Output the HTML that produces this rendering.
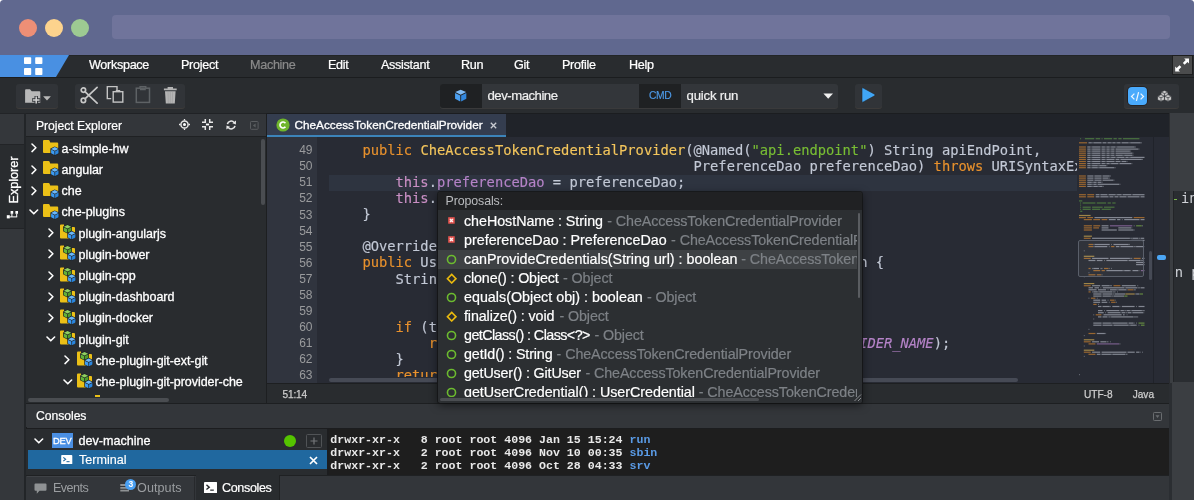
<!DOCTYPE html>
<html lang="en">
<head>
<meta charset="utf-8">
<title>Eclipse Che IDE</title>
<style>
*{box-sizing:border-box;margin:0;padding:0}
html,body{width:1194px;height:500px;overflow:hidden;background:#33363a}
body{position:relative;font-family:"Liberation Sans",sans-serif;color:#fff;font-size:12.5px}
.abs,.abs-all *{position:absolute}
#app{position:absolute;left:0;top:0;width:1194px;height:500px;overflow:hidden;-webkit-font-smoothing:antialiased;will-change:opacity;filter:contrast(1.0001)}
#app div,#app span,#app svg{position:absolute}
/* title bar */
#titlebar{left:0;top:0;width:1194px;height:55px;background:#60688f;border-radius:3.5px 3.5px 0 0}
#titlebar .dot{width:18px;height:18px;border-radius:50%;top:19px}
#addr{left:112px;top:15.3px;width:1058px;height:23.7px;border-radius:4px;background:#70749b}
/* menu bar */
#menubar{left:0;top:55px;width:1194px;height:22px;background:#292c2f;box-shadow:inset 0 1px 0 #222527}
#menubar .mi{top:0;height:22px;line-height:21px;font-size:12.6px;letter-spacing:-0.3px;color:#fff;white-space:nowrap;-webkit-text-stroke:0.22px}
#menubar .mi.dis{color:#8a8a8a}
/* toolbar */
#toolbar{left:0;top:77px;width:1194px;height:36px;background:#292c2f;border-top:1px solid #1b1d1f}
.tbtn{background:#313438;border-radius:3px;box-shadow:0 1px 0 #3d3b3a}

/* left strip */
#lstrip{left:0;top:113px;width:24px;height:387px;background:#34373b;border-top:1px solid #222427}
#lsep{left:24px;top:113px;width:2px;height:387px;background:#222528}
/* explorer */
#explorer{left:27px;top:113px;width:239px;height:290px;background:#292c2f;overflow:hidden}
.phead{background:#33363a;border-top:1px solid #202225;border-bottom:1.6px solid #1f2123}
.ptitle{font-size:12.2px;letter-spacing:-0.05px;color:#fff;white-space:nowrap;-webkit-text-stroke:0.2px #fff}
.row{left:0;width:400px;height:21.2px}
.row .lbl{top:0.8px;line-height:21px;font-size:12.5px;letter-spacing:-0.05px;color:#fff;white-space:nowrap;-webkit-text-stroke:0.3px #fff}
.vsep{background:#1d1f21}

/* editor */
#tabbar{left:267px;top:113px;width:902px;height:24px;background:#202329;border-top:1px solid #1b1d20}
#tab{left:0;top:0;width:238.6px;height:23px;background:#343d4f;border-bottom:2.4px solid #3c84ba}
#editor{left:267px;top:137px;width:902px;height:246px;background:#282b34;overflow:hidden}
#gutter{left:0;top:0;width:50px;height:246px;background:#30343e}
.ln{left:0;width:45.5px;text-align:right;height:16.08px;line-height:16.08px;font-size:12px;color:#9a9b9d}
.cl{-webkit-text-stroke:0.15px;left:62.3px;height:16.08px;line-height:16.08px;font-family:"DejaVu Sans Mono","Liberation Mono",monospace;font-size:13.75px;white-space:pre;color:#c3c9d6}
.k{color:#e8912d}.t{color:#f3c55c}.s{color:#78bd34}.f{color:#b583c8}.th{color:#c98fc4}.c{color:#c3c9d6}
#app .cl span{position:static}
#status{left:267px;top:384px;width:902px;height:19px;background:#292c2f}
#status span{font-size:10.1px;color:#cdcdcd;line-height:19px;top:1px;-webkit-text-stroke:0.25px #cdcdcd;white-space:nowrap}

/* popup */
#popup{left:438px;top:192px;width:424px;height:210.8px;background:#2c2f32;box-shadow:0 2px 8px rgba(0,0,0,0.55),0 0 0 1px #1c1e20;overflow:hidden;border-radius:2.5px}
#popup .hd{left:0;top:0;width:424px;height:17.6px;background:#202123}
#popup .it{left:0;width:419px;height:19px}
#popup .it .tx{left:26px;top:0;line-height:18.5px;font-size:14.3px;white-space:nowrap;color:#fff;letter-spacing:0;-webkit-text-stroke:0.2px}
#popup .it .tx.gr{color:#7d8186;letter-spacing:-0.09px}
/* consoles */
#consoles{left:27px;top:404px;width:1142px;height:96px;background:#33363a}
.term{font-family:"Liberation Mono",monospace;font-size:11.6px;font-weight:bold;color:#e9e9e9;white-space:pre;line-height:12.8px}
#app .term span{position:static;color:#5a9be6}
.btab{font-size:12.6px;letter-spacing:-0.1px;line-height:24px;white-space:nowrap}
</style>
</head>
<body>
<div id="app">
<!-- TITLEBAR -->
<div style="left:0;top:0;width:1194px;height:5px;background:#fff"></div>
<div id="titlebar">
  <div class="dot" style="left:19.3px;background:#ee8f76"></div>
  <div class="dot" style="left:45.4px;background:#fdd38d"></div>
  <div class="dot" style="left:71.3px;background:#9dca92"></div>
  <div id="addr"></div>
</div>
<!-- MENUBAR -->
<div id="menubar">
  <svg style="left:0;top:0" width="70" height="22" viewBox="0 0 70 22"><polygon points="0,0 69,0 56,22 0,22" fill="#4990e2"/>
    <rect x="24" y="2.3" width="7.2" height="6.8" rx="0.8" fill="#fff"/><rect x="35.2" y="2.3" width="7.2" height="6.8" rx="0.8" fill="#fff"/>
    <rect x="24" y="13" width="7.2" height="7" rx="0.8" fill="#fff"/><rect x="35.2" y="13" width="7.2" height="7" rx="0.8" fill="#fff"/>
  </svg>
  <span class="mi" style="left:89px">Workspace</span>
  <span class="mi" style="left:181px">Project</span>
  <span class="mi dis" style="left:250px">Machine</span>
  <span class="mi" style="left:328px">Edit</span>
  <span class="mi" style="left:381px">Assistant</span>
  <span class="mi" style="left:461px">Run</span>
  <span class="mi" style="left:514px">Git</span>
  <span class="mi" style="left:562px">Profile</span>
  <span class="mi" style="left:629px">Help</span>
</div>
<!-- TOOLBAR -->
<div id="toolbar">
  <!-- new project button -->
  <div class="tbtn" style="left:15.5px;top:6px;width:42.5px;height:23.5px">
    <svg style="left:7.6px;top:3.5px" width="30" height="17" viewBox="-0.7 0 30 17">
      <path d="M1.4 2.2 Q1.4 1.3 2.3 1.3 H6.3 L8 3.3 H15.6 Q16.6 3.3 16.6 4.3 V14.7 H1.4 Z" fill="#b8b8b8"/>
      <path d="M12.5 7.9 V16.1 M8.4 12 H16.6" stroke="#313438" stroke-width="3.4" fill="none"/>
      <path d="M12.5 8.6 V15.4 M9.1 12 H15.9" stroke="#d4d4d4" stroke-width="1.5" fill="none"/>
      <polygon points="19.4,8.2 27.2,8.2 23.3,12.6" fill="#b8b8b8"/>
    </svg>
  </div>
  <!-- edit group -->
  <div class="tbtn" style="left:74.5px;top:6px;width:110.5px;height:23.5px">
    <!-- cut -->
    <svg style="left:4.8px;top:1.4px" width="19" height="20" viewBox="-0.8 -0.4 19 20">
      <g fill="none" stroke="#c8c8c8" stroke-width="1.7">
        <circle cx="3.6" cy="4.7" r="2.2"/><circle cx="3.6" cy="15" r="2.2"/>
        <path d="M5.4 6.5 L17.3 17.7 M5.4 13.2 L17.3 1.9" stroke-linecap="round"/>
      </g>
    </svg>
    <!-- copy -->
    <svg style="left:31.6px;top:1.3px" width="19" height="19" viewBox="0 0 19 19">
      <g fill="none" stroke="#c4c4c4" stroke-width="1.4">
        <path d="M5.2 13.6 H1.3 V1.6 H11 V5.5"/>
        <rect x="7.2" y="6.7" width="9.6" height="10.4"/>
        <path d="M10.4 6.7 V5.6 H13.6 V6.7" stroke-width="1.2"/>
      </g>
    </svg>
    <!-- paste (disabled) -->
    <svg style="left:60.6px;top:1.2px" width="17" height="19" viewBox="0 0 17 19">
      <g fill="none" stroke="#5e6265" stroke-width="1.5">
        <rect x="1.3" y="3.2" width="13.2" height="14.2"/>
        <path d="M5 3.2 V1.6 H10.8 V3.2 M5 4.6 H10.8" stroke-width="1.3"/>
      </g>
    </svg>
    <!-- delete -->
    <svg style="left:88.2px;top:1.8px" width="15" height="19" viewBox="0 0 15 19">
      <path d="M0.9 2.6 H13.7 V4.3 H0.9 Z M4.6 0.9 H10 V2.6 H4.6 Z M2 5.2 H12.6 L11.8 17.6 H2.8 Z" fill="#b4b4b4"/><path d="M5 6 L5.3 17 M7.3 6 V17 M9.6 6 L9.3 17" stroke="#9c9c9c" stroke-width="0.6"/>
    </svg>
  </div>
  <!-- machine + command selectors -->
  <div style="left:439.5px;top:6px;width:398.5px;height:24px;border-radius:3px;background:#33363a;box-shadow:0 1px 0 #3a3a3b;overflow:hidden">
    <div style="left:0;top:0;width:42.5px;height:24px;background:#1f2123"></div>
    <svg style="left:14.6px;top:5.2px" width="13.4" height="13.4" viewBox="0 0 15 15">
      <polygon points="7.5,0.8 13.6,3.5 7.5,6.4 1.4,3.5" fill="#7fbcf7"/>
      <polygon points="1.2,4.4 7,7.2 7,14 1.2,11" fill="#4a9ff0"/>
      <polygon points="13.8,4.4 8,7.2 8,14 13.8,11" fill="#3287de"/>
    </svg>
    <span style="left:48px;top:0;line-height:23.5px;font-size:13.2px;letter-spacing:-0.5px;color:#f0f0f0;white-space:nowrap;-webkit-text-stroke:0.2px #f0f0f0">dev-machine</span>
    <div style="left:199.5px;top:0;width:42px;height:24px;background:#1f2123"></div>
    <span style="left:209.5px;top:0;line-height:24px;font-size:10.3px;letter-spacing:-0.35px;color:#4d9ae8;white-space:nowrap;-webkit-text-stroke:0.15px #4d9ae8">CMD</span>
    <span style="left:247px;top:0;line-height:23.5px;font-size:13.2px;letter-spacing:-0.2px;color:#f0f0f0;white-space:nowrap;-webkit-text-stroke:0.2px #f0f0f0">quick run</span>
    <svg style="left:383.5px;top:8.8px" width="11" height="7" viewBox="0 0 11 7"><polygon points="0.4,0.4 10,0.4 5.2,5.7" fill="#f0f0f0"/></svg>
  </div>
  <!-- run -->
  <div class="tbtn" style="left:854.5px;top:6px;width:27.5px;height:24px">
    <svg style="left:6.4px;top:3.4px" width="15" height="16" viewBox="0 0 15 16"><path d="M1 1.6 Q1 0.3 2.2 1 L13.6 7.2 Q14.6 8 13.6 8.8 L2.2 15 Q1 15.7 1 14.4 Z" fill="#40a6f6" stroke="#26292c" stroke-width="0.6"/></svg>
  </div>
  <!-- perspectives -->
  <div class="tbtn" style="left:1123.5px;top:6px;width:55.5px;height:24px">
    <div style="left:4.2px;top:3.4px;width:19px;height:17.4px;border-radius:4px;background:#49aafc;box-shadow:0 0 0 0.8px #221e1e"></div>
    <svg style="left:4.2px;top:3.6px" width="19" height="17" viewBox="0 0 19 17"><g fill="none" stroke="#eef6fe" stroke-width="1.25"><path d="M6.4 5.6 L3.5 8.5 L6.4 11.4"/><path d="M12.6 5.6 L15.5 8.5 L12.6 11.4"/><path d="M10.6 4.2 L8.4 12.8"/></g></svg>
    <svg style="left:33px;top:6px" width="15" height="12" viewBox="0 0 15 12">
      <g fill="#c9c9c9" stroke="#313438" stroke-width="0.7">
        <path d="M7.5 0.4 L11 2 V5.6 L7.5 7.2 L4 5.6 V2 Z"/>
        <path d="M4 4.6 L7.5 6.2 V9.8 L4 11.4 L0.5 9.8 V6.2 Z"/>
        <path d="M11 4.6 L14.5 6.2 V9.8 L11 11.4 L7.5 9.8 V6.2 Z"/>
      </g>
      <g fill="none" stroke="#313438" stroke-width="0.7"><path d="M4 2 L7.5 3.6 L11 2 M7.5 3.6 V7"/><path d="M0.5 6.2 L4 7.8 L7.5 6.2 M4 7.8 V11.2"/><path d="M7.5 6.2 L11 7.8 L14.5 6.2 M11 7.8 V11.2"/></g>
    </svg>
  </div>
</div>
<!-- fullscreen button in menubar -->
<div style="left:1172px;top:55px;width:21px;height:20px;background:#4b4c4d;border:1px solid #1d1e1f">
  <svg style="left:-0.6px;top:-0.4px" width="20.4" height="18.8" viewBox="0 0 20.4 18.8">
    <polygon points="12.2,2.6 17,2.6 17,7.4 15.52,5.92 12.69,8.75 10.85,6.91 13.68,4.08" fill="#fff"/>
    <polygon points="8,15.4 3.2,15.4 3.2,10.6 4.68,12.08 7.51,9.25 9.35,11.09 6.52,13.92" fill="#fff"/>
  </svg>
</div>
<svg width="0" height="0" style="left:0;top:0">
<defs>
  <g id="cubeB"><path d="M4.4 0 L8.8 2.2 V7 L4.4 9.4 L0 7 V2.2 Z" fill="#1f2225"/><polygon points="4.4,0.7 8,2.5 4.4,4.3 0.8,2.5" fill="#6ab8fb"/><polygon points="0.7,3.2 4.05,4.9 4.05,8.6 0.7,6.8" fill="#3d9bf2"/><polygon points="8.1,3.2 4.75,4.9 4.75,8.6 8.1,6.8" fill="#2b86de"/></g>
  <g id="cubeG"><path d="M4.4 0 L8.8 2.2 V7 L4.4 9.4 L0 7 V2.2 Z" fill="#1f2225"/><polygon points="4.4,0.7 8,2.5 4.4,4.3 0.8,2.5" fill="#8fd060"/><polygon points="0.7,3.2 4.05,4.9 4.05,8.6 0.7,6.8" fill="#63b33a"/><polygon points="8.1,3.2 4.75,4.9 4.75,8.6 8.1,6.8" fill="#4f9c2a"/></g>
  <g id="icoProj"><path d="M0 1 Q0 0 1 0 H5.6 Q6.3 0 6.6 0.8 L7.2 2.4 H14.2 Q15.2 2.4 15.2 3.4 V12 Q15.2 13 14.2 13 H1 Q0 13 0 12 Z" fill="#ebc017"/><use href="#cubeB" x="7.4" y="6.4"/></g>
  <g id="icoMod"><path d="M0 1.5 Q0 0.5 1 0.5 H4 V3 H14 Q15 3 15 4 V13.6 Q15 14.6 14 14.6 H1 Q0 14.6 0 13.6 Z" fill="#ebc017"/><use href="#cubeG" x="3.1" y="0.2"/><use href="#cubeB" x="7.3" y="6.7" /></g>
  <g id="chevR"><path d="M1 1 L4.9 4.8 L1 8.6" fill="none" stroke="#fff" stroke-width="1.5" stroke-linecap="round" stroke-linejoin="round"/></g>
  <g id="chevD"><path d="M1 1 L4.8 4.8 L8.6 1" fill="none" stroke="#fff" stroke-width="1.6" stroke-linecap="round" stroke-linejoin="round"/></g>
</defs></svg>
<!-- LEFT STRIP -->
<div id="lstrip">
  <div style="left:0;top:30px;width:24px;height:85px;background:#292c2f;border-top:1px solid #222427;border-bottom:1px solid #222427"></div>
  <span style="left:-10.3px;top:57.5px;width:48px;height:16px;line-height:16px;text-align:center;transform:rotate(-90deg);font-size:12.8px;color:#fff;-webkit-text-stroke:0.3px #fff;letter-spacing:-0.1px">Explorer</span>
  <svg style="left:0;top:94px" width="25" height="12" viewBox="0 95 25 12"><g fill="#fff"><rect x="6.8" y="102.2" width="3" height="3.2"/><rect x="10.6" y="98" width="2.6" height="2.8"/><rect x="15.4" y="98" width="2.6" height="2.8"/></g><path d="M11.9 100.8 V103.9 M16.7 100.8 V103.9 M9.8 103.9 H17.2" stroke="#fff" stroke-width="1" fill="none"/></svg>
</div>
<div id="lsep"></div>
<!-- PROJECT EXPLORER -->
<div style="left:26px;top:113px;width:1px;height:290px;background:#292c2f"></div>
<div class="phead" style="left:26px;top:113px;width:1px;height:24.4px"></div>
<div style="left:26px;top:404px;width:1px;height:96px;background:#33363a"></div>
<div style="left:26px;top:427.4px;width:1px;height:1.6px;background:#1c1d1f"></div>
<div style="left:26px;top:429px;width:1px;height:45.8px;background:#292c2f"></div>
<div style="left:26px;top:474.8px;width:1px;height:1px;background:#1f2123"></div>
<div id="explorer">
  <div class="phead" style="left:0;top:0;width:239px;height:24.4px"></div>
  <span class="ptitle" style="left:9px;top:2px;line-height:22px">Project Explorer</span>
  <!-- header icons -->
  <svg style="left:152.15px;top:6.05px" width="11" height="11" viewBox="0 0 11 11"><circle cx="5.5" cy="5.5" r="3.6" fill="none" stroke="#e8e8e8" stroke-width="1.5"/><path d="M5.5 0 V1.4 M5.5 9.6 V11 M0 5.5 H1.4 M9.6 5.5 H11" stroke="#e8e8e8" stroke-width="1.3"/><circle cx="5.5" cy="5.5" r="1.5" fill="#fff"/></svg>
  <svg style="left:175.2px;top:6.05px" width="11" height="11" viewBox="0 0 11 11"><g fill="none" stroke="#e8e8e8" stroke-width="1.5"><path d="M0 3.3 H3.3 V0 M7.7 0 V3.3 H11 M11 7.7 H7.7 V11 M3.3 11 V7.7 H0"/></g><rect x="3.9" y="4.6" width="3.2" height="1.8" fill="#fff"/></svg>
  <svg style="left:199.2px;top:6.5px" width="10.4" height="10" viewBox="0 0 10.4 10"><g fill="none" stroke="#e8e8e8" stroke-width="1.6"><path d="M1.4 4.2 A3.8 3.8 0 0 1 8.2 2.6"/><path d="M9 5.8 A3.8 3.8 0 0 1 2.2 7.4"/></g><polygon points="10,0.6 9.9,4.4 6.4,3.2" fill="#e8e8e8"/><polygon points="0.4,9.4 0.5,5.6 4,6.8" fill="#e8e8e8"/></svg>
  <svg style="left:222.6px;top:8.1px" width="9" height="9" viewBox="0 0 9 9"><rect x="0.5" y="0.5" width="7.6" height="7.8" rx="0.8" fill="none" stroke="#5a5d60" stroke-width="1"/><polygon points="5.6,2.4 5.6,6.4 2.8,4.4" fill="#5a5d60"/></svg>
  <!-- tree -->
  <div class="row" style="top:25.1px"><svg style="left:3.6px;top:5.4px" width="8" height="12" viewBox="0 0 8 12"><use href="#chevR"/></svg><svg style="left:16.0px;top:2px" width="17" height="17" viewBox="0 0 17 17"><use href="#icoProj"/></svg><span class="lbl" style="left:34.6px">a-simple-hw</span></div>
  <div class="row" style="top:46.3px"><svg style="left:3.6px;top:5.4px" width="8" height="12" viewBox="0 0 8 12"><use href="#chevR"/></svg><svg style="left:16.0px;top:2px" width="17" height="17" viewBox="0 0 17 17"><use href="#icoProj"/></svg><span class="lbl" style="left:34.6px">angular</span></div>
  <div class="row" style="top:67.5px"><svg style="left:3.6px;top:5.4px" width="8" height="12" viewBox="0 0 8 12"><use href="#chevR"/></svg><svg style="left:16.0px;top:2px" width="17" height="17" viewBox="0 0 17 17"><use href="#icoProj"/></svg><span class="lbl" style="left:34.6px">che</span></div>
  <div class="row" style="top:88.7px"><svg style="left:1.8px;top:7.5px" width="12" height="8" viewBox="0 0 12 8"><use href="#chevD"/></svg><svg style="left:16.0px;top:2px" width="17" height="17" viewBox="0 0 17 17"><use href="#icoProj"/></svg><span class="lbl" style="left:34.6px">che-plugins</span></div>
  <div class="row" style="top:109.9px"><svg style="left:20.5px;top:5.4px" width="8" height="12" viewBox="0 0 8 12"><use href="#chevR"/></svg><svg style="left:32.9px;top:1.4px" width="17" height="17" viewBox="0 0 17 17"><use href="#icoMod"/></svg><span class="lbl" style="left:51.5px">plugin-angularjs</span></div>
  <div class="row" style="top:131.1px"><svg style="left:20.5px;top:5.4px" width="8" height="12" viewBox="0 0 8 12"><use href="#chevR"/></svg><svg style="left:32.9px;top:1.4px" width="17" height="17" viewBox="0 0 17 17"><use href="#icoMod"/></svg><span class="lbl" style="left:51.5px">plugin-bower</span></div>
  <div class="row" style="top:152.3px"><svg style="left:20.5px;top:5.4px" width="8" height="12" viewBox="0 0 8 12"><use href="#chevR"/></svg><svg style="left:32.9px;top:1.4px" width="17" height="17" viewBox="0 0 17 17"><use href="#icoMod"/></svg><span class="lbl" style="left:51.5px">plugin-cpp</span></div>
  <div class="row" style="top:173.5px"><svg style="left:20.5px;top:5.4px" width="8" height="12" viewBox="0 0 8 12"><use href="#chevR"/></svg><svg style="left:32.9px;top:1.4px" width="17" height="17" viewBox="0 0 17 17"><use href="#icoMod"/></svg><span class="lbl" style="left:51.5px">plugin-dashboard</span></div>
  <div class="row" style="top:194.7px"><svg style="left:20.5px;top:5.4px" width="8" height="12" viewBox="0 0 8 12"><use href="#chevR"/></svg><svg style="left:32.9px;top:1.4px" width="17" height="17" viewBox="0 0 17 17"><use href="#icoMod"/></svg><span class="lbl" style="left:51.5px">plugin-docker</span></div>
  <div class="row" style="top:215.9px"><svg style="left:18.7px;top:7.5px" width="12" height="8" viewBox="0 0 12 8"><use href="#chevD"/></svg><svg style="left:32.9px;top:1.4px" width="17" height="17" viewBox="0 0 17 17"><use href="#icoMod"/></svg><span class="lbl" style="left:51.5px">plugin-git</span></div>
  <div class="row" style="top:237.1px"><svg style="left:37.4px;top:5.4px" width="8" height="12" viewBox="0 0 8 12"><use href="#chevR"/></svg><svg style="left:49.8px;top:1.4px" width="17" height="17" viewBox="0 0 17 17"><use href="#icoMod"/></svg><span class="lbl" style="left:68.4px">che-plugin-git-ext-git</span></div>
  <div class="row" style="top:258.3px"><svg style="left:35.6px;top:7.5px" width="12" height="8" viewBox="0 0 12 8"><use href="#chevD"/></svg><svg style="left:49.8px;top:1.4px" width="17" height="17" viewBox="0 0 17 17"><use href="#icoMod"/></svg><span class="lbl" style="left:68.4px">che-plugin-git-provider-che</span></div>
  <div style="left:67.5px;top:282.3px;width:5.5px;height:2px;background:#ebc017"></div>
  <!-- scrollbars -->
  <div style="left:234px;top:26px;width:3.5px;height:66px;border-radius:2px;background:#4a4d51"></div>
  <div style="left:0;top:284px;width:239px;height:6px;background:#292c2f"></div>
  <div style="left:0.5px;top:285px;width:141px;height:3.6px;border-radius:2px;background:#4a4d51"></div>
</div>
<div class="vsep" style="left:266px;top:113px;width:1px;height:291px"></div>
<!-- EDITOR -->
<div id="tabbar">
  <div id="tab"></div>
  <svg style="left:8.6px;top:4.4px" width="14" height="14" viewBox="0 0 14 14"><circle cx="7" cy="7" r="6.6" fill="#6fb52c"/><path d="M9.4 5.2 A3 3 0 1 0 9.4 8.8" fill="none" stroke="#fff" stroke-width="1.7"/></svg>
  <span style="left:27.5px;top:-1.2px;line-height:23px;font-size:11.75px;color:#fff;white-space:nowrap;-webkit-text-stroke:0.3px #fff">CheAccessTokenCredentialProvider</span>
  <svg style="left:223px;top:8px" width="7" height="7" viewBox="0 0 7 7"><path d="M0.8 0.8 L6.2 6.2 M6.2 0.8 L0.8 6.2" stroke="#c9ccd2" stroke-width="1.3"/></svg>
</div>
<div id="editor">
  <div id="gutter"></div>
  <div style="left:62px;top:38px;width:748px;height:15.5px;background:#2e3440"></div>
  <span class="ln" style="top:5.20px">49</span><span class="cl" style="top:4.90px">    <span class="k">public</span> <span class="t">CheAccessTokenCredentialProvider</span>(@Named(<span class="s">"api.endpoint"</span>) String apiEndPoint,</span>
  <span class="ln" style="top:21.28px">50</span><span class="cl" style="top:20.98px">                                            PreferenceDao preferenceDao) <span class="k">throws</span> URISyntaxException {</span>
  <span class="ln" style="top:37.36px">51</span><span class="cl" style="top:37.06px">        <span class="th">this</span>.<span class="f">preferenceDao</span> = preferenceDao;</span>
  <span class="ln" style="top:53.44px">52</span><span class="cl" style="top:53.14px">        <span class="th">this</span>.<span class="f">cheHostName</span> = <span class="k">new</span> URI(apiEndPoint).getHost();</span>
  <span class="ln" style="top:69.52px">53</span><span class="cl" style="top:69.22px">    }</span>
  <span class="ln" style="top:85.60px">54</span><span class="cl" style="top:85.30px"></span>
  <span class="ln" style="top:101.68px">55</span><span class="cl" style="top:101.38px">    @Override</span>
  <span class="ln" style="top:117.76px">56</span><span class="cl" style="top:117.46px">    <span class="k">public</span> UserCredential <span class="t">getUserCredential</span>() <span class="k">throws</span> GitException {</span>
  <span class="ln" style="top:133.84px">57</span><span class="cl" style="top:133.54px">        String token = <span class="k">null</span>;</span>
  <span class="ln" style="top:149.92px">58</span><span class="cl" style="top:149.62px"></span>
  <span class="ln" style="top:166.00px">59</span><span class="cl" style="top:165.70px"></span>
  <span class="ln" style="top:182.08px">60</span><span class="cl" style="top:181.78px">        <span class="k">if</span> (token != <span class="k">null</span>) {</span>
  <span class="ln" style="top:198.16px">61</span><span class="cl" style="top:197.86px">            <span class="k">return new</span> UserCredential(profile, token, <span class="f"><i>OAUTH_PROVIDER_NAME</i></span>);</span>
  <span class="ln" style="top:214.24px">62</span><span class="cl" style="top:213.94px">        }</span>
  <span class="ln" style="top:230.32px">63</span><span class="cl" style="top:230.02px">        <span class="k">return</span> UserCredential.<span class="f"><i>EMPTY_CREDENTIALS</i></span>;</span>
  <!-- h scrollbar -->
  <div style="left:50px;top:240.4px;width:760px;height:6px;background:#282b34"></div>
  <div style="left:62px;top:241px;width:689px;height:3.6px;border-radius:2px;background:#464a55"></div>
  <!-- minimap -->
  <div id="minimap" style="left:810px;top:0;width:76px;height:246px;background:#282b34"><svg style="left:0;top:0" width="76" height="246" viewBox="0 0 76 246" opacity="0.62"><rect x="3.2" y="1.1" width="0.9" height="1.2" fill="#5f9f45"/><rect x="7.9" y="1.1" width="9.3" height="1.2" fill="#5f9f45"/><rect x="18.7" y="1.1" width="4.5" height="1.2" fill="#5f9f45"/><rect x="24.6" y="1.1" width="0.9" height="1.2" fill="#5f9f45"/><rect x="27.0" y="1.1" width="8.1" height="1.2" fill="#5f9f45"/><rect x="36.5" y="1.1" width="3.3" height="1.2" fill="#5f9f45"/><rect x="41.3" y="1.1" width="3.3" height="1.2" fill="#5f9f45"/><rect x="46.0" y="1.1" width="16.4" height="1.2" fill="#5f9f45"/><rect x="2.0" y="5.2" width="8.1" height="1.2" fill="#de8a2e"/><rect x="11.5" y="5.2" width="3.3" height="1.2" fill="#b9bfca"/><rect x="15.1" y="5.2" width="0.9" height="1.2" fill="#8d929c"/><rect x="16.3" y="5.2" width="8.1" height="1.2" fill="#b9bfca"/><rect x="24.6" y="5.2" width="0.9" height="1.2" fill="#8d929c"/><rect x="25.8" y="5.2" width="3.3" height="1.2" fill="#b9bfca"/><rect x="29.4" y="5.2" width="0.9" height="1.2" fill="#8d929c"/><rect x="30.6" y="5.2" width="3.3" height="1.2" fill="#b9bfca"/><rect x="34.1" y="5.2" width="0.9" height="1.2" fill="#8d929c"/><rect x="35.3" y="5.2" width="3.3" height="1.2" fill="#b9bfca"/><rect x="38.9" y="5.2" width="0.9" height="1.2" fill="#8d929c"/><rect x="40.1" y="5.2" width="3.3" height="1.2" fill="#b9bfca"/><rect x="43.6" y="5.2" width="0.9" height="1.2" fill="#8d929c"/><rect x="44.8" y="5.2" width="6.9" height="1.2" fill="#b9bfca"/><rect x="52.0" y="5.2" width="0.9" height="1.2" fill="#8d929c"/><rect x="53.2" y="5.2" width="10.5" height="1.2" fill="#b9bfca"/><rect x="63.9" y="5.2" width="0.9" height="1.2" fill="#8d929c"/><rect x="2.0" y="9.4" width="6.9" height="1.2" fill="#de8a2e"/><rect x="10.3" y="9.4" width="3.3" height="1.2" fill="#b9bfca"/><rect x="13.9" y="9.4" width="0.9" height="1.2" fill="#8d929c"/><rect x="15.1" y="9.4" width="8.1" height="1.2" fill="#b9bfca"/><rect x="23.4" y="9.4" width="0.9" height="1.2" fill="#8d929c"/><rect x="24.6" y="9.4" width="3.3" height="1.2" fill="#b9bfca"/><rect x="28.2" y="9.4" width="0.9" height="1.2" fill="#8d929c"/><rect x="29.4" y="9.4" width="3.3" height="1.2" fill="#b9bfca"/><rect x="32.9" y="9.4" width="0.9" height="1.2" fill="#8d929c"/><rect x="34.1" y="9.4" width="4.5" height="1.2" fill="#b9bfca"/><rect x="38.9" y="9.4" width="0.9" height="1.2" fill="#8d929c"/><rect x="40.1" y="9.4" width="17.6" height="1.2" fill="#b9bfca"/><rect x="57.9" y="9.4" width="0.9" height="1.2" fill="#8d929c"/><rect x="2.0" y="11.5" width="6.9" height="1.2" fill="#de8a2e"/><rect x="10.3" y="11.5" width="3.3" height="1.2" fill="#b9bfca"/><rect x="13.9" y="11.5" width="0.9" height="1.2" fill="#8d929c"/><rect x="15.1" y="11.5" width="8.1" height="1.2" fill="#b9bfca"/><rect x="23.4" y="11.5" width="0.9" height="1.2" fill="#8d929c"/><rect x="24.6" y="11.5" width="3.3" height="1.2" fill="#b9bfca"/><rect x="28.2" y="11.5" width="0.9" height="1.2" fill="#8d929c"/><rect x="29.4" y="11.5" width="3.3" height="1.2" fill="#b9bfca"/><rect x="32.9" y="11.5" width="0.9" height="1.2" fill="#8d929c"/><rect x="34.1" y="11.5" width="3.3" height="1.2" fill="#b9bfca"/><rect x="37.7" y="11.5" width="0.9" height="1.2" fill="#8d929c"/><rect x="38.9" y="11.5" width="22.4" height="1.2" fill="#b9bfca"/><rect x="61.5" y="11.5" width="0.9" height="1.2" fill="#8d929c"/><rect x="2.0" y="13.5" width="6.9" height="1.2" fill="#de8a2e"/><rect x="10.3" y="13.5" width="3.3" height="1.2" fill="#b9bfca"/><rect x="13.9" y="13.5" width="0.9" height="1.2" fill="#8d929c"/><rect x="15.1" y="13.5" width="8.1" height="1.2" fill="#b9bfca"/><rect x="23.4" y="13.5" width="0.9" height="1.2" fill="#8d929c"/><rect x="24.6" y="13.5" width="3.3" height="1.2" fill="#b9bfca"/><rect x="28.2" y="13.5" width="0.9" height="1.2" fill="#8d929c"/><rect x="29.4" y="13.5" width="3.3" height="1.2" fill="#b9bfca"/><rect x="32.9" y="13.5" width="0.9" height="1.2" fill="#8d929c"/><rect x="34.1" y="13.5" width="3.3" height="1.2" fill="#b9bfca"/><rect x="37.7" y="13.5" width="0.9" height="1.2" fill="#8d929c"/><rect x="38.9" y="13.5" width="14.0" height="1.2" fill="#b9bfca"/><rect x="53.2" y="13.5" width="0.9" height="1.2" fill="#8d929c"/><rect x="2.0" y="15.6" width="6.9" height="1.2" fill="#de8a2e"/><rect x="10.3" y="15.6" width="3.3" height="1.2" fill="#b9bfca"/><rect x="13.9" y="15.6" width="0.9" height="1.2" fill="#8d929c"/><rect x="15.1" y="15.6" width="8.1" height="1.2" fill="#b9bfca"/><rect x="23.4" y="15.6" width="0.9" height="1.2" fill="#8d929c"/><rect x="24.6" y="15.6" width="3.3" height="1.2" fill="#b9bfca"/><rect x="28.2" y="15.6" width="0.9" height="1.2" fill="#8d929c"/><rect x="29.4" y="15.6" width="3.3" height="1.2" fill="#b9bfca"/><rect x="32.9" y="15.6" width="0.9" height="1.2" fill="#8d929c"/><rect x="34.1" y="15.6" width="3.3" height="1.2" fill="#b9bfca"/><rect x="37.7" y="15.6" width="0.9" height="1.2" fill="#8d929c"/><rect x="38.9" y="15.6" width="16.4" height="1.2" fill="#b9bfca"/><rect x="55.5" y="15.6" width="0.9" height="1.2" fill="#8d929c"/><rect x="2.0" y="17.7" width="6.9" height="1.2" fill="#de8a2e"/><rect x="10.3" y="17.7" width="3.3" height="1.2" fill="#b9bfca"/><rect x="13.9" y="17.7" width="0.9" height="1.2" fill="#8d929c"/><rect x="15.1" y="17.7" width="8.1" height="1.2" fill="#b9bfca"/><rect x="23.4" y="17.7" width="0.9" height="1.2" fill="#8d929c"/><rect x="24.6" y="17.7" width="3.3" height="1.2" fill="#b9bfca"/><rect x="28.2" y="17.7" width="0.9" height="1.2" fill="#8d929c"/><rect x="29.4" y="17.7" width="3.3" height="1.2" fill="#b9bfca"/><rect x="32.9" y="17.7" width="0.9" height="1.2" fill="#8d929c"/><rect x="34.1" y="17.7" width="3.3" height="1.2" fill="#b9bfca"/><rect x="37.7" y="17.7" width="0.9" height="1.2" fill="#8d929c"/><rect x="38.9" y="17.7" width="6.9" height="1.2" fill="#b9bfca"/><rect x="46.0" y="17.7" width="0.9" height="1.2" fill="#8d929c"/><rect x="47.2" y="17.7" width="8.1" height="1.2" fill="#b9bfca"/><rect x="55.5" y="17.7" width="0.9" height="1.2" fill="#8d929c"/><rect x="2.0" y="19.8" width="6.9" height="1.2" fill="#de8a2e"/><rect x="10.3" y="19.8" width="3.3" height="1.2" fill="#b9bfca"/><rect x="13.9" y="19.8" width="0.9" height="1.2" fill="#8d929c"/><rect x="15.1" y="19.8" width="8.1" height="1.2" fill="#b9bfca"/><rect x="23.4" y="19.8" width="0.9" height="1.2" fill="#8d929c"/><rect x="24.6" y="19.8" width="3.3" height="1.2" fill="#b9bfca"/><rect x="28.2" y="19.8" width="0.9" height="1.2" fill="#8d929c"/><rect x="29.4" y="19.8" width="3.3" height="1.2" fill="#b9bfca"/><rect x="32.9" y="19.8" width="0.9" height="1.2" fill="#8d929c"/><rect x="34.1" y="19.8" width="4.5" height="1.2" fill="#b9bfca"/><rect x="38.9" y="19.8" width="0.9" height="1.2" fill="#8d929c"/><rect x="40.1" y="19.8" width="6.9" height="1.2" fill="#b9bfca"/><rect x="47.2" y="19.8" width="0.9" height="1.2" fill="#8d929c"/><rect x="48.4" y="19.8" width="3.3" height="1.2" fill="#b9bfca"/><rect x="52.0" y="19.8" width="0.9" height="1.2" fill="#8d929c"/><rect x="53.2" y="19.8" width="14.3" height="1.2" fill="#b9bfca"/><rect x="2.0" y="21.8" width="6.9" height="1.2" fill="#de8a2e"/><rect x="10.3" y="21.8" width="3.3" height="1.2" fill="#b9bfca"/><rect x="13.9" y="21.8" width="0.9" height="1.2" fill="#8d929c"/><rect x="15.1" y="21.8" width="8.1" height="1.2" fill="#b9bfca"/><rect x="23.4" y="21.8" width="0.9" height="1.2" fill="#8d929c"/><rect x="24.6" y="21.8" width="3.3" height="1.2" fill="#b9bfca"/><rect x="28.2" y="21.8" width="0.9" height="1.2" fill="#8d929c"/><rect x="29.4" y="21.8" width="8.1" height="1.2" fill="#b9bfca"/><rect x="37.7" y="21.8" width="0.9" height="1.2" fill="#8d929c"/><rect x="38.9" y="21.8" width="3.3" height="1.2" fill="#b9bfca"/><rect x="42.5" y="21.8" width="0.9" height="1.2" fill="#8d929c"/><rect x="43.6" y="21.8" width="21.2" height="1.2" fill="#b9bfca"/><rect x="65.1" y="21.8" width="0.9" height="1.2" fill="#8d929c"/><rect x="2.0" y="23.9" width="6.9" height="1.2" fill="#de8a2e"/><rect x="10.3" y="23.9" width="3.3" height="1.2" fill="#b9bfca"/><rect x="13.9" y="23.9" width="0.9" height="1.2" fill="#8d929c"/><rect x="15.1" y="23.9" width="8.1" height="1.2" fill="#b9bfca"/><rect x="23.4" y="23.9" width="0.9" height="1.2" fill="#8d929c"/><rect x="24.6" y="23.9" width="3.3" height="1.2" fill="#b9bfca"/><rect x="28.2" y="23.9" width="0.9" height="1.2" fill="#8d929c"/><rect x="29.4" y="23.9" width="8.1" height="1.2" fill="#b9bfca"/><rect x="37.7" y="23.9" width="0.9" height="1.2" fill="#8d929c"/><rect x="38.9" y="23.9" width="4.5" height="1.2" fill="#b9bfca"/><rect x="43.6" y="23.9" width="0.9" height="1.2" fill="#8d929c"/><rect x="44.8" y="23.9" width="4.5" height="1.2" fill="#b9bfca"/><rect x="49.6" y="23.9" width="0.9" height="1.2" fill="#8d929c"/><rect x="2.0" y="26.0" width="6.9" height="1.2" fill="#de8a2e"/><rect x="10.3" y="26.0" width="3.3" height="1.2" fill="#b9bfca"/><rect x="13.9" y="26.0" width="0.9" height="1.2" fill="#8d929c"/><rect x="15.1" y="26.0" width="8.1" height="1.2" fill="#b9bfca"/><rect x="23.4" y="26.0" width="0.9" height="1.2" fill="#8d929c"/><rect x="24.6" y="26.0" width="3.3" height="1.2" fill="#b9bfca"/><rect x="28.2" y="26.0" width="0.9" height="1.2" fill="#8d929c"/><rect x="29.4" y="26.0" width="3.3" height="1.2" fill="#b9bfca"/><rect x="32.9" y="26.0" width="0.9" height="1.2" fill="#8d929c"/><rect x="34.1" y="26.0" width="6.9" height="1.2" fill="#b9bfca"/><rect x="41.3" y="26.0" width="0.9" height="1.2" fill="#8d929c"/><rect x="42.5" y="26.0" width="11.6" height="1.2" fill="#b9bfca"/><rect x="54.4" y="26.0" width="0.9" height="1.2" fill="#8d929c"/><rect x="2.0" y="28.1" width="6.9" height="1.2" fill="#de8a2e"/><rect x="10.3" y="28.1" width="3.3" height="1.2" fill="#b9bfca"/><rect x="13.9" y="28.1" width="0.9" height="1.2" fill="#8d929c"/><rect x="15.1" y="28.1" width="5.7" height="1.2" fill="#b9bfca"/><rect x="21.0" y="28.1" width="0.9" height="1.2" fill="#8d929c"/><rect x="22.2" y="28.1" width="6.9" height="1.2" fill="#b9bfca"/><rect x="29.4" y="28.1" width="0.9" height="1.2" fill="#8d929c"/><rect x="2.0" y="30.1" width="6.9" height="1.2" fill="#de8a2e"/><rect x="10.3" y="30.1" width="3.3" height="1.2" fill="#b9bfca"/><rect x="13.9" y="30.1" width="0.9" height="1.2" fill="#8d929c"/><rect x="15.1" y="30.1" width="5.7" height="1.2" fill="#b9bfca"/><rect x="21.0" y="30.1" width="0.9" height="1.2" fill="#8d929c"/><rect x="22.2" y="30.1" width="15.2" height="1.2" fill="#b9bfca"/><rect x="37.7" y="30.1" width="0.9" height="1.2" fill="#8d929c"/><rect x="2.0" y="38.4" width="6.9" height="1.2" fill="#de8a2e"/><rect x="10.3" y="38.4" width="5.7" height="1.2" fill="#b9bfca"/><rect x="16.3" y="38.4" width="0.9" height="1.2" fill="#8d929c"/><rect x="17.5" y="38.4" width="6.9" height="1.2" fill="#b9bfca"/><rect x="24.6" y="38.4" width="0.9" height="1.2" fill="#8d929c"/><rect x="25.8" y="38.4" width="6.9" height="1.2" fill="#b9bfca"/><rect x="32.9" y="38.4" width="0.9" height="1.2" fill="#8d929c"/><rect x="2.0" y="40.5" width="6.9" height="1.2" fill="#de8a2e"/><rect x="10.3" y="40.5" width="5.7" height="1.2" fill="#b9bfca"/><rect x="16.3" y="40.5" width="0.9" height="1.2" fill="#8d929c"/><rect x="17.5" y="40.5" width="6.9" height="1.2" fill="#b9bfca"/><rect x="24.6" y="40.5" width="0.9" height="1.2" fill="#8d929c"/><rect x="25.8" y="40.5" width="5.7" height="1.2" fill="#b9bfca"/><rect x="31.8" y="40.5" width="0.9" height="1.2" fill="#8d929c"/><rect x="2.0" y="42.6" width="6.9" height="1.2" fill="#de8a2e"/><rect x="10.3" y="42.6" width="5.7" height="1.2" fill="#b9bfca"/><rect x="16.3" y="42.6" width="0.9" height="1.2" fill="#8d929c"/><rect x="17.5" y="42.6" width="6.9" height="1.2" fill="#b9bfca"/><rect x="24.6" y="42.6" width="0.9" height="1.2" fill="#8d929c"/><rect x="25.8" y="42.6" width="10.5" height="1.2" fill="#b9bfca"/><rect x="36.5" y="42.6" width="0.9" height="1.2" fill="#8d929c"/><rect x="2.0" y="44.7" width="6.9" height="1.2" fill="#de8a2e"/><rect x="10.3" y="44.7" width="4.5" height="1.2" fill="#b9bfca"/><rect x="15.1" y="44.7" width="0.9" height="1.2" fill="#8d929c"/><rect x="16.3" y="44.7" width="3.3" height="1.2" fill="#b9bfca"/><rect x="19.8" y="44.7" width="0.9" height="1.2" fill="#8d929c"/><rect x="21.0" y="44.7" width="3.3" height="1.2" fill="#b9bfca"/><rect x="24.6" y="44.7" width="0.9" height="1.2" fill="#8d929c"/><rect x="2.0" y="46.7" width="6.9" height="1.2" fill="#de8a2e"/><rect x="10.3" y="46.7" width="4.5" height="1.2" fill="#b9bfca"/><rect x="15.1" y="46.7" width="0.9" height="1.2" fill="#8d929c"/><rect x="16.3" y="46.7" width="3.3" height="1.2" fill="#b9bfca"/><rect x="19.8" y="46.7" width="0.9" height="1.2" fill="#8d929c"/><rect x="21.0" y="46.7" width="21.2" height="1.2" fill="#b9bfca"/><rect x="42.5" y="46.7" width="0.9" height="1.2" fill="#8d929c"/><rect x="2.0" y="48.8" width="6.9" height="1.2" fill="#de8a2e"/><rect x="10.3" y="48.8" width="4.5" height="1.2" fill="#b9bfca"/><rect x="15.1" y="48.8" width="0.9" height="1.2" fill="#8d929c"/><rect x="16.3" y="48.8" width="4.5" height="1.2" fill="#b9bfca"/><rect x="21.0" y="48.8" width="0.9" height="1.2" fill="#8d929c"/><rect x="22.2" y="48.8" width="3.3" height="1.2" fill="#b9bfca"/><rect x="25.8" y="48.8" width="0.9" height="1.2" fill="#8d929c"/><rect x="2.0" y="57.1" width="6.9" height="1.2" fill="#de8a2e"/><rect x="10.3" y="57.1" width="6.9" height="1.2" fill="#de8a2e"/><rect x="18.7" y="57.1" width="3.3" height="1.2" fill="#b9bfca"/><rect x="22.2" y="57.1" width="0.9" height="1.2" fill="#8d929c"/><rect x="23.4" y="57.1" width="6.9" height="1.2" fill="#b9bfca"/><rect x="30.6" y="57.1" width="0.9" height="1.2" fill="#8d929c"/><rect x="31.8" y="57.1" width="6.9" height="1.2" fill="#b9bfca"/><rect x="38.9" y="57.1" width="0.9" height="1.2" fill="#8d929c"/><rect x="40.1" y="57.1" width="4.5" height="1.2" fill="#b9bfca"/><rect x="44.8" y="57.1" width="0.9" height="1.2" fill="#8d929c"/><rect x="46.0" y="57.1" width="8.1" height="1.2" fill="#b9bfca"/><rect x="54.4" y="57.1" width="0.9" height="1.2" fill="#8d929c"/><rect x="55.5" y="57.1" width="12.0" height="1.2" fill="#b9bfca"/><rect x="2.0" y="59.2" width="6.9" height="1.2" fill="#de8a2e"/><rect x="10.3" y="59.2" width="6.9" height="1.2" fill="#de8a2e"/><rect x="18.7" y="59.2" width="3.3" height="1.2" fill="#b9bfca"/><rect x="22.2" y="59.2" width="0.9" height="1.2" fill="#8d929c"/><rect x="23.4" y="59.2" width="8.1" height="1.2" fill="#b9bfca"/><rect x="31.8" y="59.2" width="0.9" height="1.2" fill="#8d929c"/><rect x="32.9" y="59.2" width="3.3" height="1.2" fill="#b9bfca"/><rect x="36.5" y="59.2" width="0.9" height="1.2" fill="#8d929c"/><rect x="37.7" y="59.2" width="3.3" height="1.2" fill="#b9bfca"/><rect x="41.3" y="59.2" width="0.9" height="1.2" fill="#8d929c"/><rect x="42.5" y="59.2" width="6.9" height="1.2" fill="#b9bfca"/><rect x="49.6" y="59.2" width="0.9" height="1.2" fill="#8d929c"/><rect x="50.8" y="59.2" width="11.6" height="1.2" fill="#b9bfca"/><rect x="62.7" y="59.2" width="0.9" height="1.2" fill="#8d929c"/><rect x="63.9" y="59.2" width="3.6" height="1.2" fill="#b9bfca"/><rect x="2.0" y="63.3" width="3.3" height="1.2" fill="#5f9f45"/><rect x="3.2" y="65.4" width="0.9" height="1.2" fill="#5f9f45"/><rect x="5.6" y="65.4" width="12.8" height="1.2" fill="#5f9f45"/><rect x="19.8" y="65.4" width="9.3" height="1.2" fill="#5f9f45"/><rect x="30.6" y="65.4" width="3.3" height="1.2" fill="#5f9f45"/><rect x="35.3" y="65.4" width="3.3" height="1.2" fill="#5f9f45"/><rect x="3.2" y="67.5" width="0.9" height="1.2" fill="#5f9f45"/><rect x="3.2" y="69.6" width="0.9" height="1.2" fill="#5f9f45"/><rect x="5.6" y="69.6" width="8.1" height="1.2" fill="#5f9f45"/><rect x="15.1" y="69.6" width="10.5" height="1.2" fill="#5f9f45"/><rect x="27.0" y="69.6" width="10.5" height="1.2" fill="#5f9f45"/><rect x="3.2" y="71.7" width="0.9" height="1.2" fill="#5f9f45"/><rect x="5.6" y="71.7" width="8.1" height="1.2" fill="#5f9f45"/><rect x="15.1" y="71.7" width="8.1" height="1.2" fill="#5f9f45"/><rect x="24.6" y="71.7" width="9.3" height="1.2" fill="#5f9f45"/><rect x="3.2" y="73.7" width="2.1" height="1.2" fill="#5f9f45"/><rect x="2.0" y="77.9" width="11.6" height="1.2" fill="#e9bd55"/><rect x="2.0" y="80.0" width="6.9" height="1.2" fill="#de8a2e"/><rect x="10.3" y="80.0" width="5.7" height="1.2" fill="#de8a2e"/><rect x="17.5" y="80.0" width="37.8" height="1.2" fill="#b9bfca"/><rect x="56.7" y="80.0" width="10.8" height="1.2" fill="#de8a2e"/><rect x="6.8" y="82.0" width="8.1" height="1.2" fill="#de8a2e"/><rect x="16.3" y="82.0" width="6.9" height="1.2" fill="#de8a2e"/><rect x="24.6" y="82.0" width="5.7" height="1.2" fill="#de8a2e"/><rect x="31.8" y="82.0" width="6.9" height="1.2" fill="#b9bfca"/><rect x="40.1" y="82.0" width="3.3" height="1.2" fill="#b9bfca"/><rect x="44.8" y="82.0" width="0.9" height="1.2" fill="#8d929c"/><rect x="47.2" y="82.0" width="15.2" height="1.2" fill="#b9bfca"/><rect x="62.7" y="82.0" width="0.9" height="1.2" fill="#8d929c"/><rect x="63.9" y="82.0" width="3.6" height="1.2" fill="#b9bfca"/><rect x="6.8" y="88.2" width="8.1" height="1.2" fill="#de8a2e"/><rect x="16.3" y="88.2" width="6.9" height="1.2" fill="#de8a2e"/><rect x="24.6" y="88.2" width="6.9" height="1.2" fill="#b9bfca"/><rect x="32.9" y="88.2" width="22.4" height="1.2" fill="#a97cc0"/><rect x="56.7" y="88.2" width="0.9" height="1.2" fill="#8d929c"/><rect x="59.1" y="88.2" width="5.7" height="1.2" fill="#86c04a"/><rect x="65.1" y="88.2" width="0.9" height="1.2" fill="#8d929c"/><rect x="6.8" y="90.3" width="8.1" height="1.2" fill="#de8a2e"/><rect x="16.3" y="90.3" width="5.7" height="1.2" fill="#de8a2e"/><rect x="24.6" y="90.3" width="6.9" height="1.2" fill="#b9bfca"/><rect x="41.3" y="90.3" width="12.8" height="1.2" fill="#b9bfca"/><rect x="54.4" y="90.3" width="0.9" height="1.2" fill="#8d929c"/><rect x="6.8" y="92.4" width="8.1" height="1.2" fill="#de8a2e"/><rect x="24.6" y="92.4" width="15.2" height="1.2" fill="#b9bfca"/><rect x="41.3" y="92.4" width="15.2" height="1.2" fill="#b9bfca"/><rect x="56.7" y="92.4" width="0.9" height="1.2" fill="#8d929c"/><rect x="6.8" y="98.6" width="8.1" height="1.2" fill="#e9bd55"/><rect x="6.8" y="100.7" width="6.9" height="1.2" fill="#de8a2e"/><rect x="15.1" y="100.7" width="37.8" height="1.2" fill="#b9bfca"/><rect x="53.2" y="100.7" width="2.1" height="1.2" fill="#8d929c"/><rect x="55.5" y="100.7" width="5.7" height="1.2" fill="#b9bfca"/><rect x="61.5" y="100.7" width="2.1" height="1.2" fill="#8d929c"/><rect x="63.9" y="100.7" width="3.3" height="1.2" fill="#b9bfca"/><rect x="67.5" y="100.7" width="0.0" height="1.2" fill="#8d929c"/><rect x="54.4" y="102.8" width="13.1" height="1.2" fill="#b9bfca"/><rect x="11.5" y="106.9" width="4.5" height="1.2" fill="#de8a2e"/><rect x="16.3" y="106.9" width="0.9" height="1.2" fill="#8d929c"/><rect x="17.5" y="106.9" width="15.2" height="1.2" fill="#b9bfca"/><rect x="34.1" y="106.9" width="0.9" height="1.2" fill="#8d929c"/><rect x="36.5" y="106.9" width="15.2" height="1.2" fill="#b9bfca"/><rect x="52.0" y="106.9" width="0.9" height="1.2" fill="#8d929c"/><rect x="11.5" y="109.0" width="4.5" height="1.2" fill="#de8a2e"/><rect x="16.3" y="109.0" width="0.9" height="1.2" fill="#8d929c"/><rect x="17.5" y="109.0" width="12.8" height="1.2" fill="#b9bfca"/><rect x="31.8" y="109.0" width="0.9" height="1.2" fill="#8d929c"/><rect x="34.1" y="109.0" width="3.3" height="1.2" fill="#de8a2e"/><rect x="38.9" y="109.0" width="3.3" height="1.2" fill="#b9bfca"/><rect x="42.5" y="109.0" width="0.9" height="1.2" fill="#8d929c"/><rect x="43.6" y="109.0" width="12.8" height="1.2" fill="#b9bfca"/><rect x="56.7" y="109.0" width="2.1" height="1.2" fill="#8d929c"/><rect x="59.1" y="109.0" width="8.1" height="1.2" fill="#b9bfca"/><rect x="67.5" y="109.0" width="0.0" height="1.2" fill="#8d929c"/><rect x="6.8" y="113.2" width="0.9" height="1.2" fill="#8d929c"/><rect x="6.8" y="118.7" width="10.5" height="1.2" fill="#e9bd55"/><rect x="6.8" y="120.8" width="6.9" height="1.2" fill="#de8a2e"/><rect x="15.1" y="120.8" width="16.4" height="1.2" fill="#b9bfca"/><rect x="32.9" y="120.8" width="20.0" height="1.2" fill="#b9bfca"/><rect x="53.2" y="120.8" width="2.1" height="1.2" fill="#8d929c"/><rect x="56.7" y="120.8" width="6.9" height="1.2" fill="#de8a2e"/><rect x="65.1" y="120.8" width="2.4" height="1.2" fill="#b9bfca"/><rect x="11.5" y="122.9" width="6.9" height="1.2" fill="#b9bfca"/><rect x="19.8" y="122.9" width="5.7" height="1.2" fill="#b9bfca"/><rect x="27.0" y="122.9" width="0.9" height="1.2" fill="#8d929c"/><rect x="29.4" y="122.9" width="21.2" height="1.2" fill="#b9bfca"/><rect x="50.8" y="122.9" width="0.9" height="1.2" fill="#8d929c"/><rect x="52.0" y="122.9" width="11.6" height="1.2" fill="#b9bfca"/><rect x="63.9" y="122.9" width="3.3" height="1.2" fill="#8d929c"/><rect x="67.5" y="122.9" width="0.0" height="1.2" fill="#b9bfca"/><rect x="59.1" y="124.9" width="8.4" height="1.2" fill="#b9bfca"/><rect x="59.1" y="127.0" width="8.4" height="1.2" fill="#b9bfca"/><rect x="11.5" y="130.9" width="2.1" height="1.2" fill="#de8a2e"/><rect x="15.1" y="130.9" width="0.9" height="1.2" fill="#8d929c"/><rect x="16.3" y="130.9" width="5.7" height="1.2" fill="#b9bfca"/><rect x="23.4" y="130.9" width="2.1" height="1.2" fill="#8d929c"/><rect x="27.0" y="130.9" width="4.5" height="1.2" fill="#de8a2e"/><rect x="31.8" y="130.9" width="0.9" height="1.2" fill="#8d929c"/><rect x="34.1" y="130.9" width="0.9" height="1.2" fill="#8d929c"/><rect x="16.3" y="133.0" width="6.9" height="1.2" fill="#de8a2e"/><rect x="24.6" y="133.0" width="3.3" height="1.2" fill="#de8a2e"/><rect x="29.4" y="133.0" width="16.4" height="1.2" fill="#b9bfca"/><rect x="46.0" y="133.0" width="0.9" height="1.2" fill="#8d929c"/><rect x="47.2" y="133.0" width="5.7" height="1.2" fill="#b9bfca"/><rect x="53.2" y="133.0" width="0.9" height="1.2" fill="#8d929c"/><rect x="55.5" y="133.0" width="5.7" height="1.2" fill="#b9bfca"/><rect x="61.5" y="133.0" width="0.9" height="1.2" fill="#8d929c"/><rect x="63.9" y="133.0" width="3.6" height="1.2" fill="#a97cc0"/><rect x="11.5" y="135.1" width="0.9" height="1.2" fill="#8d929c"/><rect x="11.5" y="137.2" width="6.9" height="1.2" fill="#de8a2e"/><rect x="19.8" y="137.2" width="4.5" height="1.2" fill="#de8a2e"/><rect x="24.6" y="137.2" width="0.9" height="1.2" fill="#8d929c"/><rect x="6.8" y="139.2" width="0.9" height="1.2" fill="#8d929c"/><rect x="6.8" y="146.0" width="10.5" height="1.2" fill="#e9bd55"/><rect x="6.8" y="148.1" width="6.9" height="1.2" fill="#de8a2e"/><rect x="15.1" y="148.1" width="8.1" height="1.2" fill="#b9bfca"/><rect x="24.6" y="148.1" width="8.1" height="1.2" fill="#b9bfca"/><rect x="32.9" y="148.1" width="2.1" height="1.2" fill="#8d929c"/><rect x="36.5" y="148.1" width="6.9" height="1.2" fill="#de8a2e"/><rect x="44.8" y="148.1" width="14.0" height="1.2" fill="#b9bfca"/><rect x="60.3" y="148.1" width="0.9" height="1.2" fill="#8d929c"/><rect x="11.5" y="150.2" width="4.5" height="1.2" fill="#b9bfca"/><rect x="17.5" y="150.2" width="4.5" height="1.2" fill="#b9bfca"/><rect x="23.4" y="150.2" width="0.9" height="1.2" fill="#8d929c"/><rect x="25.8" y="150.2" width="21.2" height="1.2" fill="#b9bfca"/><rect x="47.2" y="150.2" width="0.9" height="1.2" fill="#8d929c"/><rect x="48.4" y="150.2" width="11.6" height="1.2" fill="#b9bfca"/><rect x="60.3" y="150.2" width="3.3" height="1.2" fill="#8d929c"/><rect x="63.9" y="150.2" width="3.6" height="1.2" fill="#b9bfca"/><rect x="11.5" y="152.2" width="8.1" height="1.2" fill="#b9bfca"/><rect x="21.0" y="152.2" width="8.1" height="1.2" fill="#b9bfca"/><rect x="30.6" y="152.2" width="0.9" height="1.2" fill="#8d929c"/><rect x="32.9" y="152.2" width="6.9" height="1.2" fill="#b9bfca"/><rect x="40.1" y="152.2" width="0.9" height="1.2" fill="#8d929c"/><rect x="41.3" y="152.2" width="8.1" height="1.2" fill="#b9bfca"/><rect x="49.6" y="152.2" width="0.9" height="1.2" fill="#8d929c"/><rect x="50.8" y="152.2" width="5.7" height="1.2" fill="#de8a2e"/><rect x="56.7" y="152.2" width="2.1" height="1.2" fill="#8d929c"/><rect x="11.5" y="154.3" width="2.1" height="1.2" fill="#de8a2e"/><rect x="15.1" y="154.3" width="0.9" height="1.2" fill="#8d929c"/><rect x="16.3" y="154.3" width="4.5" height="1.2" fill="#b9bfca"/><rect x="21.0" y="154.3" width="0.9" height="1.2" fill="#8d929c"/><rect x="22.2" y="154.3" width="12.8" height="1.2" fill="#b9bfca"/><rect x="35.3" y="154.3" width="3.3" height="1.2" fill="#8d929c"/><rect x="40.1" y="154.3" width="0.9" height="1.2" fill="#8d929c"/><rect x="16.3" y="156.4" width="8.1" height="1.2" fill="#b9bfca"/><rect x="24.6" y="156.4" width="0.9" height="1.2" fill="#8d929c"/><rect x="25.8" y="156.4" width="9.3" height="1.2" fill="#b9bfca"/><rect x="35.3" y="156.4" width="2.1" height="1.2" fill="#8d929c"/><rect x="37.7" y="156.4" width="10.5" height="1.2" fill="#b9bfca"/><rect x="48.4" y="156.4" width="9.3" height="1.2" fill="#e9bd55"/><rect x="57.9" y="156.4" width="0.9" height="1.2" fill="#8d929c"/><rect x="59.1" y="156.4" width="3.3" height="1.2" fill="#b9bfca"/><rect x="62.7" y="156.4" width="3.3" height="1.2" fill="#86c04a"/><rect x="16.3" y="158.5" width="8.1" height="1.2" fill="#b9bfca"/><rect x="24.6" y="158.5" width="0.9" height="1.2" fill="#8d929c"/><rect x="25.8" y="158.5" width="8.1" height="1.2" fill="#b9bfca"/><rect x="34.1" y="158.5" width="2.1" height="1.2" fill="#8d929c"/><rect x="36.5" y="158.5" width="10.5" height="1.2" fill="#b9bfca"/><rect x="47.2" y="158.5" width="3.3" height="1.2" fill="#86c04a"/><rect x="11.5" y="160.6" width="0.9" height="1.2" fill="#8d929c"/><rect x="13.9" y="160.6" width="4.5" height="1.2" fill="#de8a2e"/><rect x="19.8" y="160.6" width="0.9" height="1.2" fill="#8d929c"/><rect x="16.3" y="162.6" width="6.9" height="1.2" fill="#b9bfca"/><rect x="24.6" y="162.6" width="4.5" height="1.2" fill="#b9bfca"/><rect x="30.6" y="162.6" width="0.9" height="1.2" fill="#8d929c"/><rect x="32.9" y="162.6" width="4.5" height="1.2" fill="#de8a2e"/><rect x="37.7" y="162.6" width="0.9" height="1.2" fill="#8d929c"/><rect x="16.3" y="164.7" width="6.9" height="1.2" fill="#b9bfca"/><rect x="24.6" y="164.7" width="5.7" height="1.2" fill="#b9bfca"/><rect x="31.8" y="164.7" width="0.9" height="1.2" fill="#8d929c"/><rect x="34.1" y="164.7" width="4.5" height="1.2" fill="#de8a2e"/><rect x="38.9" y="164.7" width="0.9" height="1.2" fill="#8d929c"/><rect x="16.3" y="166.8" width="3.3" height="1.2" fill="#de8a2e"/><rect x="21.0" y="166.8" width="0.9" height="1.2" fill="#8d929c"/><rect x="21.0" y="168.9" width="3.3" height="1.2" fill="#b9bfca"/><rect x="24.6" y="168.9" width="0.9" height="1.2" fill="#8d929c"/><rect x="25.8" y="168.9" width="6.9" height="1.2" fill="#b9bfca"/><rect x="32.9" y="168.9" width="0.9" height="1.2" fill="#8d929c"/><rect x="35.3" y="168.9" width="6.9" height="1.2" fill="#b9bfca"/><rect x="42.5" y="168.9" width="0.9" height="1.2" fill="#8d929c"/><rect x="44.8" y="168.9" width="12.8" height="1.2" fill="#b9bfca"/><rect x="59.1" y="168.9" width="0.9" height="1.2" fill="#8d929c"/><rect x="61.5" y="168.9" width="6.0" height="1.2" fill="#b9bfca"/><rect x="21.0" y="173.0" width="4.5" height="1.2" fill="#b9bfca"/><rect x="27.0" y="173.0" width="0.9" height="1.2" fill="#8d929c"/><rect x="29.4" y="173.0" width="12.8" height="1.2" fill="#b9bfca"/><rect x="42.5" y="173.0" width="0.9" height="1.2" fill="#8d929c"/><rect x="43.6" y="173.0" width="3.3" height="1.2" fill="#b9bfca"/><rect x="47.2" y="173.0" width="2.1" height="1.2" fill="#8d929c"/><rect x="49.6" y="173.0" width="3.3" height="1.2" fill="#b9bfca"/><rect x="53.2" y="173.0" width="0.9" height="1.2" fill="#8d929c"/><rect x="54.4" y="173.0" width="10.5" height="1.2" fill="#b9bfca"/><rect x="65.1" y="173.0" width="0.9" height="1.2" fill="#8d929c"/><rect x="66.3" y="173.0" width="1.2" height="1.2" fill="#b9bfca"/><rect x="21.0" y="175.1" width="5.7" height="1.2" fill="#b9bfca"/><rect x="28.2" y="175.1" width="0.9" height="1.2" fill="#8d929c"/><rect x="30.6" y="175.1" width="12.8" height="1.2" fill="#b9bfca"/><rect x="43.6" y="175.1" width="0.9" height="1.2" fill="#8d929c"/><rect x="44.8" y="175.1" width="3.3" height="1.2" fill="#b9bfca"/><rect x="48.4" y="175.1" width="2.1" height="1.2" fill="#8d929c"/><rect x="50.8" y="175.1" width="3.3" height="1.2" fill="#b9bfca"/><rect x="54.4" y="175.1" width="0.9" height="1.2" fill="#8d929c"/><rect x="55.5" y="175.1" width="10.5" height="1.2" fill="#b9bfca"/><rect x="66.3" y="175.1" width="0.9" height="1.2" fill="#8d929c"/><rect x="67.5" y="175.1" width="0.0" height="1.2" fill="#b9bfca"/><rect x="16.3" y="177.2" width="0.9" height="1.2" fill="#8d929c"/><rect x="18.7" y="177.2" width="5.7" height="1.2" fill="#de8a2e"/><rect x="25.8" y="177.2" width="0.9" height="1.2" fill="#8d929c"/><rect x="27.0" y="177.2" width="17.6" height="1.2" fill="#b9bfca"/><rect x="46.0" y="177.2" width="0.9" height="1.2" fill="#b9bfca"/><rect x="47.2" y="177.2" width="0.9" height="1.2" fill="#8d929c"/><rect x="49.6" y="177.2" width="0.9" height="1.2" fill="#8d929c"/><rect x="21.0" y="179.3" width="3.3" height="1.2" fill="#b9bfca"/><rect x="24.6" y="179.3" width="0.9" height="1.2" fill="#8d929c"/><rect x="25.8" y="179.3" width="4.5" height="1.2" fill="#b9bfca"/><rect x="30.6" y="179.3" width="0.9" height="1.2" fill="#8d929c"/><rect x="31.8" y="179.3" width="0.9" height="1.2" fill="#b9bfca"/><rect x="32.9" y="179.3" width="0.9" height="1.2" fill="#8d929c"/><rect x="34.1" y="179.3" width="22.4" height="1.2" fill="#b9bfca"/><rect x="56.7" y="179.3" width="4.5" height="1.2" fill="#8d929c"/><rect x="16.3" y="181.4" width="0.9" height="1.2" fill="#8d929c"/><rect x="16.3" y="185.5" width="8.1" height="1.2" fill="#b9bfca"/><rect x="24.6" y="185.5" width="0.9" height="1.2" fill="#8d929c"/><rect x="25.8" y="185.5" width="8.1" height="1.2" fill="#b9bfca"/><rect x="34.1" y="185.5" width="0.9" height="1.2" fill="#8d929c"/><rect x="35.3" y="185.5" width="15.2" height="1.2" fill="#b9bfca"/><rect x="50.8" y="185.5" width="0.9" height="1.2" fill="#8d929c"/><rect x="52.0" y="185.5" width="4.5" height="1.2" fill="#b9bfca"/><rect x="56.7" y="185.5" width="0.9" height="1.2" fill="#8d929c"/><rect x="59.1" y="185.5" width="0.9" height="1.2" fill="#8d929c"/><rect x="61.5" y="185.5" width="6.0" height="1.2" fill="#86c04a"/><rect x="16.3" y="187.6" width="8.1" height="1.2" fill="#b9bfca"/><rect x="24.6" y="187.6" width="0.9" height="1.2" fill="#8d929c"/><rect x="25.8" y="187.6" width="9.3" height="1.2" fill="#b9bfca"/><rect x="35.3" y="187.6" width="0.9" height="1.2" fill="#8d929c"/><rect x="36.5" y="187.6" width="15.2" height="1.2" fill="#b9bfca"/><rect x="52.0" y="187.6" width="0.9" height="1.2" fill="#8d929c"/><rect x="53.2" y="187.6" width="5.7" height="1.2" fill="#b9bfca"/><rect x="59.1" y="187.6" width="0.9" height="1.2" fill="#8d929c"/><rect x="61.5" y="187.6" width="0.9" height="1.2" fill="#8d929c"/><rect x="63.9" y="187.6" width="3.6" height="1.2" fill="#86c04a"/><rect x="11.5" y="191.8" width="0.9" height="1.2" fill="#8d929c"/><rect x="11.5" y="195.9" width="6.9" height="1.2" fill="#de8a2e"/><rect x="19.8" y="195.9" width="8.1" height="1.2" fill="#b9bfca"/><rect x="28.2" y="195.9" width="0.9" height="1.2" fill="#8d929c"/><rect x="6.8" y="198.0" width="0.9" height="1.2" fill="#8d929c"/><rect x="6.8" y="202.2" width="10.5" height="1.2" fill="#e9bd55"/><rect x="6.8" y="204.2" width="6.9" height="1.2" fill="#de8a2e"/><rect x="15.1" y="204.2" width="6.9" height="1.2" fill="#b9bfca"/><rect x="23.4" y="204.2" width="5.7" height="1.2" fill="#b9bfca"/><rect x="29.4" y="204.2" width="2.1" height="1.2" fill="#8d929c"/><rect x="32.9" y="204.2" width="0.9" height="1.2" fill="#8d929c"/><rect x="11.5" y="206.3" width="6.9" height="1.2" fill="#de8a2e"/><rect x="19.8" y="206.3" width="22.4" height="1.2" fill="#a97cc0"/><rect x="42.5" y="206.3" width="0.9" height="1.2" fill="#8d929c"/><rect x="6.8" y="208.4" width="0.9" height="1.2" fill="#8d929c"/><rect x="6.8" y="212.6" width="10.5" height="1.2" fill="#e9bd55"/><rect x="6.8" y="214.6" width="6.9" height="1.2" fill="#de8a2e"/><rect x="15.1" y="214.6" width="8.1" height="1.2" fill="#b9bfca"/><rect x="24.6" y="214.6" width="24.7" height="1.2" fill="#b9bfca"/><rect x="49.6" y="214.6" width="0.9" height="1.2" fill="#8d929c"/><rect x="50.8" y="214.6" width="6.9" height="1.2" fill="#b9bfca"/><rect x="59.1" y="214.6" width="3.3" height="1.2" fill="#b9bfca"/><rect x="62.7" y="214.6" width="0.9" height="1.2" fill="#8d929c"/><rect x="65.1" y="214.6" width="0.9" height="1.2" fill="#8d929c"/><rect x="11.5" y="216.7" width="6.9" height="1.2" fill="#de8a2e"/><rect x="19.8" y="216.7" width="3.3" height="1.2" fill="#b9bfca"/><rect x="23.4" y="216.7" width="0.9" height="1.2" fill="#8d929c"/><rect x="24.6" y="216.7" width="9.3" height="1.2" fill="#b9bfca"/><rect x="34.1" y="216.7" width="0.9" height="1.2" fill="#8d929c"/><rect x="35.3" y="216.7" width="12.8" height="1.2" fill="#b9bfca"/><rect x="48.4" y="216.7" width="2.1" height="1.2" fill="#8d929c"/><rect x="6.8" y="218.8" width="0.9" height="1.2" fill="#8d929c"/><rect x="2.0" y="237.0" width="0.9" height="1.2" fill="#8d929c"/></svg></div>
  <div style="left:810.5px;top:103px;width:66px;height:36.5px;border:1px solid #5a5f6a;border-radius:2px;background:rgba(255,255,255,0.04)"></div>
  <div style="left:882px;top:113.5px;width:3.4px;height:29px;border-radius:2px;background:#464a55"></div>
  <div style="left:886px;top:0;width:16px;height:246px;background:#282b34;border-left:1px solid #20232a"></div>
  <div style="left:889.5px;top:118.3px;width:9px;height:4.6px;border-radius:2px;background:#4ba6f5"></div>
</div>
<div class="vsep" style="left:267px;top:383px;width:902px;height:1px"></div>
<div id="status">
  <span style="left:15.6px;letter-spacing:-0.2px">51:14</span>
  <span style="left:817px">UTF-8</span>
  <span style="left:865.7px">Java</span>
</div>
<!-- CONSOLES -->
<div class="vsep" style="left:26px;top:403px;width:1143px;height:1px"></div>
<div id="consoles">
  <div class="phead" style="left:0;top:0;width:1142px;height:25px;border-top:none;border-bottom:1.6px solid #1c1d1f"></div>
  <span class="ptitle" style="left:9px;top:0.8px;line-height:23px">Consoles</span>
  <svg style="left:1126px;top:8px" width="9" height="9" viewBox="0 0 9 9"><rect x="0.5" y="0.5" width="8" height="8" rx="0.8" fill="none" stroke="#6a6d70" stroke-width="1"/><polygon points="2.5,3.2 6.5,3.2 4.5,6" fill="#6a6d70"/></svg>
  <!-- process tree -->
  <div style="left:0;top:25px;width:300px;height:45.8px;background:#292c2f"></div>
  <svg style="left:6.5px;top:33.5px" width="12" height="8" viewBox="0 0 12 8"><use href="#chevD"/></svg>
  <div style="left:24.6px;top:29.2px;width:21.2px;height:15.2px;background:#4a8fe3"></div>
  <span style="left:24.6px;top:28.6px;width:21.2px;text-align:center;line-height:16px;font-size:9.3px;color:#fff;letter-spacing:-0.2px;-webkit-text-stroke:0.3px #fff">DEV</span>
  <span style="left:51.5px;top:27px;line-height:21px;font-size:12.6px;color:#fff;-webkit-text-stroke:0.3px #fff;white-space:nowrap">dev-machine</span>
  <div style="left:257px;top:31px;width:12px;height:12px;border-radius:50%;background:#55c400"></div>
  <svg style="left:278.5px;top:29.6px" width="16" height="14" viewBox="0 0 16 14"><rect x="0.5" y="0.5" width="15" height="13" rx="1" fill="none" stroke="#505356" stroke-width="1"/><path d="M8 3.5 V10.5 M4.5 7 H11.5" stroke="#74777a" stroke-width="1.2"/></svg>
  <div style="left:0.5px;top:46px;width:299.5px;height:18.5px;background:#20689f"></div>
  <svg style="left:34.4px;top:50.8px" width="11.5" height="9.4" viewBox="0 0 13 11"><rect x="0" y="0" width="13" height="11" rx="1" fill="#fff"/><path d="M2.5 2.8 L5.2 5 L2.5 7.2" fill="none" stroke="#20689f" stroke-width="1.3"/><path d="M6.2 7.8 H9.8" stroke="#20689f" stroke-width="1.2"/></svg>
  <span style="left:52px;top:45.6px;line-height:21px;font-size:12.6px;color:#fff;white-space:nowrap;-webkit-text-stroke:0.15px">Terminal</span>
  <svg style="left:281.5px;top:51.5px" width="9" height="9" viewBox="0 0 9 9"><path d="M1 1 L8 8 M8 1 L1 8" stroke="#fff" stroke-width="1.7"/></svg>
  <div style="left:299.6px;top:25px;width:2.4px;height:46px;background:#1c1d1f"></div>
  <!-- terminal -->
  <div style="left:302px;top:25px;width:840px;height:45.8px;background:#1e1e1e"></div>
  <span class="term" style="left:303.3px;top:30px">drwxr-xr-x   8 root root 4096 Jan 15 15:24 <span>run</span>
drwxr-xr-x   2 root root 4096 Nov 10 00:35 <span>sbin</span>
drwxr-xr-x   2 root root 4096 Oct 28 04:33 <span>srv</span></span>
  <!-- bottom tabs -->
  <div style="left:0;top:70.8px;width:1142px;height:1px;background:#1f2123"></div>
  <div style="left:0;top:71.8px;width:168px;height:24.2px;background:#33363a;border-top:1px solid #3f4246;border-right:1px solid #27292c"></div>
  <svg style="left:6.8px;top:78.5px" width="13" height="12" viewBox="0 0 13 12"><path d="M1.5 0.5 H11.5 Q12.5 0.5 12.5 1.5 V6.8 Q12.5 7.8 11.5 7.8 H5.5 L2.8 10.8 V7.8 H1.5 Q0.5 7.8 0.5 6.8 V1.5 Q0.5 0.5 1.5 0.5 Z" fill="#8f9294"/></svg>
  <span class="btab" style="left:26px;top:72px;color:#9b9ea1;letter-spacing:-0.55px">Events</span>
  <svg style="left:92.5px;top:80px" width="10" height="8" viewBox="0 0 10 8"><path d="M0.3 1 H9 M0.3 3.8 H9 M0.3 6.6 H9" stroke="#8f9294" stroke-width="1.8"/></svg>
  <div style="left:98.3px;top:75.3px;width:11px;height:11px;border-radius:50%;background:#4aa0f2"></div>
  <span style="left:98.3px;top:75.3px;width:11px;text-align:center;line-height:11px;font-size:8.5px;font-weight:bold;color:#fff">3</span>
  <span class="btab" style="left:110px;top:72px;color:#9b9ea1;letter-spacing:0.08px">Outputs</span>
  <div style="left:168.5px;top:70.8px;width:84px;height:25.2px;background:#292c2f;border-right:1px solid #1f2123"></div>
  <svg style="left:176.8px;top:78px" width="13.2" height="11.4" viewBox="0 0 14 12"><rect x="0" y="0" width="14" height="12" rx="1" fill="#fff"/><path d="M2.6 3 L5.6 5.4 L2.6 7.8" fill="none" stroke="#292c2f" stroke-width="1.4"/><path d="M6.6 8.6 H10.4" stroke="#292c2f" stroke-width="1.3"/></svg>
  <span class="btab" style="left:195px;top:72px;color:#fff;-webkit-text-stroke:0.2px #fff;letter-spacing:-0.38px">Consoles</span>
</div>
<!-- RIGHT PANEL -->
<div id="rpanel" style="left:1169px;top:113px;width:25px;height:387px;background:#3b3e42">
  <div style="left:0;top:0;width:1px;height:270px;background:#2a2c2f"></div>
  <div style="left:-0.5px;top:270px;width:3.5px;height:117px;background:#2b2e32"></div>
  <div style="left:4px;top:78px;width:21px;height:191px;background:#2a2d31;border-left:1px solid #222427"></div>
  <div style="left:5px;top:85.5px;width:3px;height:1.6px;background:#7cb84a"></div>
  <span style="left:12px;top:77px;font-family:'DejaVu Sans Mono',monospace;font-size:13.75px;line-height:16px;color:#d0d3d8;white-space:pre">in</span>
  <span style="left:5.8px;top:150.5px;font-family:'DejaVu Sans Mono',monospace;font-size:13.75px;line-height:16px;color:#d0d3d8;white-space:pre">n p</span>
</div>
<!-- PROPOSALS POPUP -->
<div id="popup">
  <div class="hd"></div>
  <span style="left:7.5px;top:-0.3px;line-height:18.5px;font-size:12.4px;color:#b9bbbe;letter-spacing:-0.1px">Proposals:</span>
  <div class="it" style="top:20px"><svg style="left:10.2px;top:5.2px" width="7" height="7" viewBox="0 0 7 7"><rect x="0.2" y="0.2" width="6.5" height="6.5" fill="#e5544f"/><path d="M2 2 L4.9 4.9 M4.9 2 L2 4.9" stroke="#fff0ee" stroke-width="1.4"/></svg><span class="tx" style="letter-spacing:-0.045px">cheHostName : String</span><span class="tx gr" style="left:169.3px">- CheAccessTokenCredentialProvider</span></div>
  <div class="it" style="top:39px"><svg style="left:10.2px;top:5.2px" width="7" height="7" viewBox="0 0 7 7"><rect x="0.2" y="0.2" width="6.5" height="6.5" fill="#e5544f"/><path d="M2 2 L4.9 4.9 M4.9 2 L2 4.9" stroke="#fff0ee" stroke-width="1.4"/></svg><span class="tx" style="letter-spacing:0.000px">preferenceDao : PreferenceDao</span><span class="tx gr" style="left:233.1px">- CheAccessTokenCredentialProvider</span></div>
  <div class="it" style="top:58px;background:#3e4144"><svg style="left:8.1px;top:3.6px" width="11" height="11" viewBox="0 0 11 11"><circle cx="5.5" cy="5.5" r="4.05" fill="none" stroke="#6cbb2f" stroke-width="1.6"/></svg><span class="tx" style="letter-spacing:0.000px">canProvideCredentials(String url) : boolean</span><span class="tx gr" style="left:303.3px">- CheAccessTokenCredentialProvider</span></div>
  <div class="it" style="top:77px"><svg style="left:8.3px;top:3.8px" width="11.4" height="11.4" viewBox="0 0 12 12"><path d="M6 1.5 L10.5 6 L6 10.5 L1.5 6 Z" fill="none" stroke="#e9b90e" stroke-width="1.7"/></svg><span class="tx" style="letter-spacing:-0.149px">clone() : Object</span><span class="tx gr" style="left:125.0px">- Object</span></div>
  <div class="it" style="top:96px"><svg style="left:8.1px;top:3.6px" width="11" height="11" viewBox="0 0 11 11"><circle cx="5.5" cy="5.5" r="4.05" fill="none" stroke="#6cbb2f" stroke-width="1.6"/></svg><span class="tx" style="letter-spacing:0.000px">equals(Object obj) : boolean</span><span class="tx gr" style="left:208.9px">- Object</span></div>
  <div class="it" style="top:115px"><svg style="left:8.3px;top:3.8px" width="11.4" height="11.4" viewBox="0 0 12 12"><path d="M6 1.5 L10.5 6 L6 10.5 L1.5 6 Z" fill="none" stroke="#e9b90e" stroke-width="1.7"/></svg><span class="tx" style="letter-spacing:-0.111px">finalize() : void</span><span class="tx gr" style="left:121.4px">- Object</span></div>
  <div class="it" style="top:134px"><svg style="left:8.1px;top:3.6px" width="11" height="11" viewBox="0 0 11 11"><circle cx="5.5" cy="5.5" r="4.05" fill="none" stroke="#6cbb2f" stroke-width="1.6"/></svg><span class="tx" style="letter-spacing:-0.553px">getClass() : Class&lt;?&gt;</span><span class="tx gr" style="left:156.4px">- Object</span></div>
  <div class="it" style="top:153px"><svg style="left:8.1px;top:3.6px" width="11" height="11" viewBox="0 0 11 11"><circle cx="5.5" cy="5.5" r="4.05" fill="none" stroke="#6cbb2f" stroke-width="1.6"/></svg><span class="tx" style="letter-spacing:-0.133px">getId() : String</span><span class="tx gr" style="left:118.6px">- CheAccessTokenCredentialProvider</span></div>
  <div class="it" style="top:172px"><svg style="left:8.1px;top:3.6px" width="11" height="11" viewBox="0 0 11 11"><circle cx="5.5" cy="5.5" r="4.05" fill="none" stroke="#6cbb2f" stroke-width="1.6"/></svg><span class="tx" style="letter-spacing:-0.159px">getUser() : GitUser</span><span class="tx gr" style="left:147.4px">- CheAccessTokenCredentialProvider</span></div>
  <div class="it" style="top:191px"><svg style="left:8.1px;top:3.6px" width="11" height="11" viewBox="0 0 11 11"><circle cx="5.5" cy="5.5" r="4.05" fill="none" stroke="#6cbb2f" stroke-width="1.6"/></svg><span class="tx" style="letter-spacing:-0.032px">getUserCredential() : UserCredential</span><span class="tx gr" style="left:260.8px">- CheAccessTokenCredentialProvider</span></div>
  <div style="left:0;top:205px;width:424px;height:5px;background:#2c2f32"></div>
  <div style="left:2px;top:205.7px;width:318.5px;height:3.3px;border-radius:2px;background:#4b4e52"></div>
  <div style="left:419px;top:18.5px;width:5px;height:192px;background:#2c2f32"></div>
  <div style="left:419.8px;top:21.2px;width:2.5px;height:85px;border-radius:2px;background:#5a5d61"></div>
  <svg style="left:415px;top:201px" width="9" height="9" viewBox="0 0 9 9"><path d="M8 1.5 L1.5 8 M8 5 L5 8" stroke="#8a8d90" stroke-width="1"/></svg>
</div>
</div>
</body>
</html>
